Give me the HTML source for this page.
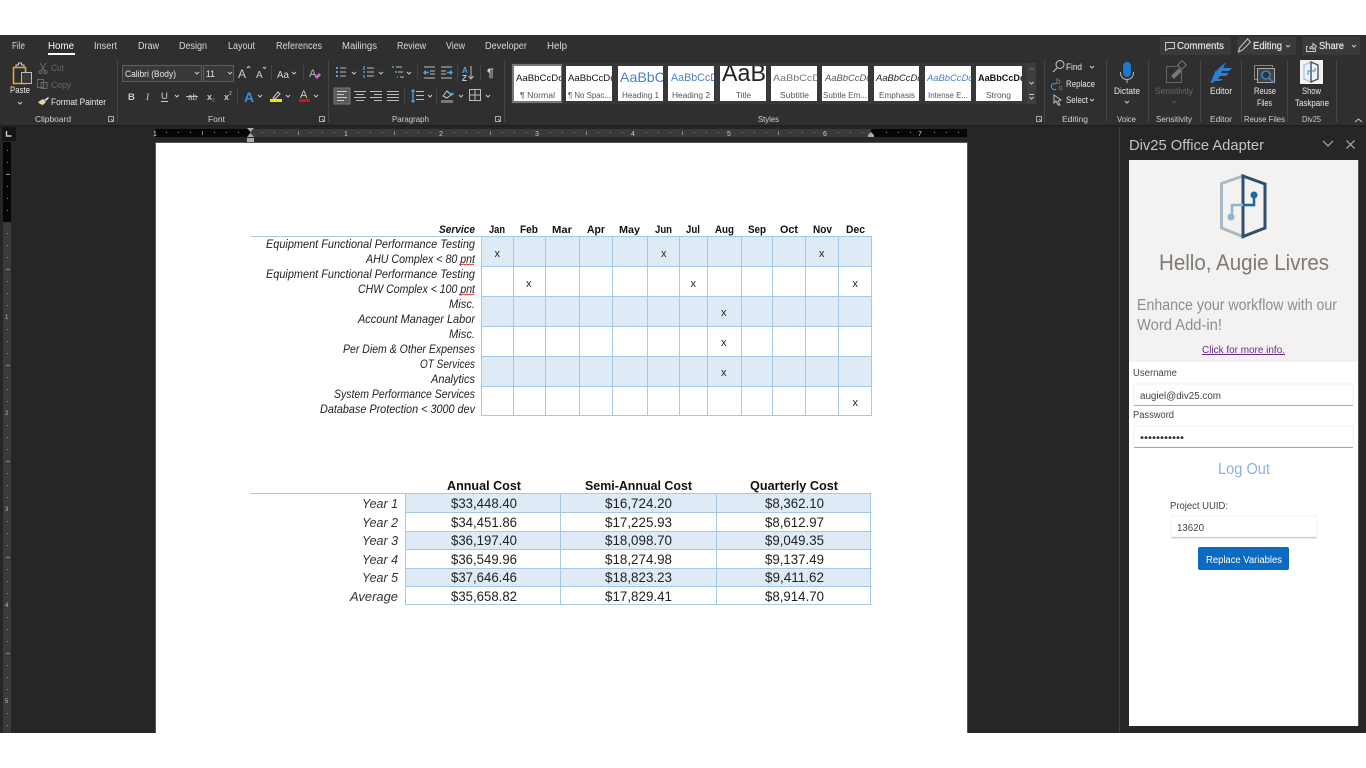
<!DOCTYPE html>
<html><head><meta charset="utf-8"><title>Word</title>
<style>
html,body{margin:0;padding:0;background:#fff;width:1366px;height:768px;overflow:hidden}
svg{display:block}
text{font-family:"Liberation Sans",sans-serif;white-space:pre}
.t{font-size:9px;fill:#e8e8e8}
.tb{font-size:10px;fill:#d8d8d8}
.d{font-size:9px;fill:#666}
.l{font-size:8.5px;fill:#d0d0d0}
.i{font-size:12px;font-style:italic;fill:#222}
.bh{font-size:11px;font-weight:bold;fill:#111}
.x{font-size:11px;fill:#222}
.n{font-size:14px;fill:#222}
.y{font-size:13px;font-style:italic;fill:#333}
.h{font-size:13px;font-weight:bold;fill:#111}
.s{font-size:9px;fill:#111}
.sl{font-size:8.5px;fill:#555}
.p{font-size:10px;fill:#444}
.ln{stroke:#bdbdbd;stroke-width:1;fill:none}
.bl{stroke:#4aa3e0;stroke-width:1.4;fill:none}
.c{stroke:#c8c8c8;stroke-width:1;fill:none}
.sep{stroke:#454545;stroke-width:1}
.g{stroke:#a6c8e8;stroke-width:1}
</style></head><body>
<svg width="1366" height="768" viewBox="0 0 1366 768" xmlns="http://www.w3.org/2000/svg">
<rect width="1366" height="768" fill="#fff"/>
<rect y="35" width="1366" height="698" fill="#262626"/>
<rect y="35" width="1366" height="91" fill="#2f2f2f"/>
<rect y="125" width="1366" height="2" fill="#202020"/>

<!-- tabs -->
<text class="tb" x="12" y="49" textLength="13" lengthAdjust="spacingAndGlyphs">File</text>
<text class="tb" x="48" y="49" textLength="26" lengthAdjust="spacingAndGlyphs" style="fill:#fff">Home</text>
<rect x="48" y="53" width="27" height="2" fill="#fff"/>
<text class="tb" x="94" y="49" textLength="23" lengthAdjust="spacingAndGlyphs">Insert</text>
<text class="tb" x="138" y="49" textLength="21" lengthAdjust="spacingAndGlyphs">Draw</text>
<text class="tb" x="179" y="49" textLength="28" lengthAdjust="spacingAndGlyphs">Design</text>
<text class="tb" x="228" y="49" textLength="27" lengthAdjust="spacingAndGlyphs">Layout</text>
<text class="tb" x="276" y="49" textLength="46" lengthAdjust="spacingAndGlyphs">References</text>
<text class="tb" x="342" y="49" textLength="35" lengthAdjust="spacingAndGlyphs">Mailings</text>
<text class="tb" x="397" y="49" textLength="29" lengthAdjust="spacingAndGlyphs">Review</text>
<text class="tb" x="446" y="49" textLength="19" lengthAdjust="spacingAndGlyphs">View</text>
<text class="tb" x="485" y="49" textLength="42" lengthAdjust="spacingAndGlyphs">Developer</text>
<text class="tb" x="547" y="49" textLength="20" lengthAdjust="spacingAndGlyphs">Help</text>

<!-- top right buttons -->
<rect x="1160" y="37" width="71" height="18" rx="1" fill="#3a3a3a"/>
<rect x="1237" y="37" width="59" height="18" rx="1" fill="#3a3a3a"/>
<rect x="1302" y="37" width="58" height="18" rx="1" fill="#3a3a3a"/>
<path d="M1165.500 42.500h9v6h-6l-3 2z" class="c"/>
<text class="tb" x="1177" y="49" textLength="47" lengthAdjust="spacingAndGlyphs" style="fill:#e4e4e4;stroke:#e4e4e4;stroke-width:.2">Comments</text>
<path d="M1238.500 52l1-4 8-9 3 3-8 8z" class="c"/>
<text class="tb" x="1253" y="49" textLength="29" lengthAdjust="spacingAndGlyphs" style="fill:#e4e4e4;stroke:#e4e4e4;stroke-width:.2">Editing</text>
<path d="M1286 45l2 2 2-2" class="c"/>
<path d="M1308 46.500h-1.500v5h9v-3M1310 49v-2l3-1v-2.500l3.500 3-3.500 3v-2z" class="c"/>
<text class="tb" x="1319" y="49" textLength="25" lengthAdjust="spacingAndGlyphs" style="fill:#e4e4e4;stroke:#e4e4e4;stroke-width:.2">Share</text>
<path d="M1352 45l2 2 2-2" class="c"/>

<!-- Clipboard -->
<path d="M13.500 67.500h12v16h-12z" fill="none" stroke="#e8a33d" stroke-width="1.600"/>
<path d="M16 67v-2h2.500v-2h3v2h2.500v2" fill="none" stroke="#cfcfcf"/>
<rect x="21.500" y="72.500" width="10" height="11" fill="#3a3a3a" stroke="#bdbdbd"/>
<text class="t" x="10" y="93" textLength="20" lengthAdjust="spacingAndGlyphs">Paste</text>
<path d="M18 102l2 2 2-2" class="c"/>
<path d="M40 63l5 8M46 63l-5 8" stroke="#6a6a6a" fill="none"/><circle cx="40.500" cy="72" r="1.500" fill="none" stroke="#6a6a6a"/><circle cx="45.500" cy="72" r="1.500" fill="none" stroke="#6a6a6a"/>
<text class="d" x="51" y="71" textLength="13" lengthAdjust="spacingAndGlyphs">Cut</text>
<path d="M37.500 79.500h6v8h-6zM41 82.500h6v6h-6z" fill="#2f2f2f" stroke="#6a6a6a"/>
<text class="d" x="51" y="88" textLength="20" lengthAdjust="spacingAndGlyphs">Copy</text>
<path d="M38 102l5-3 3 3-3 3-3-1z" fill="#e8d8a0"/><path d="M44 100l4-3 1 1-3 3z" fill="#ddd"/>
<text class="t" x="51" y="105" textLength="55" lengthAdjust="spacingAndGlyphs">Format Painter</text>
<text class="l" x="35" y="122" textLength="36" lengthAdjust="spacingAndGlyphs">Clipboard</text>
<path d="M108.500 116.500h5v5h-5zM111 119l2 2" stroke="#aaa" fill="none"/>
<line class="sep" x1="117.500" y1="60" x2="117.500" y2="122"/>

<!-- Font -->
<rect x="122.500" y="65.500" width="79" height="16" fill="#383838" stroke="#5e5e5e"/>
<rect x="203.500" y="65.500" width="30" height="16" fill="#383838" stroke="#5e5e5e"/>
<text class="t" x="125" y="77" textLength="51" lengthAdjust="spacingAndGlyphs">Calibri (Body)</text>
<path d="M195 72l2 2 2-2M228 72l2 2 2-2" class="c"/>
<text class="t" x="206" y="77" textLength="9" lengthAdjust="spacingAndGlyphs">11</text>
<text x="238" y="78" style="font-size:12px;fill:#ccc">A</text><path d="M247 68l1.500-1.500 1.500 1.500" class="c"/>
<text x="256" y="78" style="font-size:10px;fill:#ccc">A</text><path d="M263 67l1.500 1.500 1.500-1.500" class="c"/>
<text class="tb" x="277" y="78" textLength="12" lengthAdjust="spacingAndGlyphs">Aa</text><path d="M292 72l2 2 2-2" class="c"/>
<line class="sep" x1="271.500" y1="65" x2="271.500" y2="81"/><line class="sep" x1="303.500" y1="65" x2="303.500" y2="81"/>
<text x="309" y="77" style="font-size:11px;fill:#bbb">A</text><path d="M315 77l4-4 2 2-4 4z" fill="#c86fc8"/>

<text x="128" y="100" style="font-size:9.500px;font-weight:bold;fill:#ccc">B</text>
<text x="146" y="100" style="font-size:9.500px;font-style:italic;fill:#ccc;font-family:'Liberation Serif',serif">I</text>
<text x="161" y="99" style="font-size:9.500px;fill:#ccc">U</text><line x1="161" y1="101.500" x2="168" y2="101.500" stroke="#ccc"/>
<path d="M175 95l2 2 2-2M258 95l2 2 2-2M286 95l2 2 2-2M314 95l2 2 2-2" class="c"/>
<text x="188" y="100" textLength="9" lengthAdjust="spacingAndGlyphs" style="font-size:9px;fill:#bbb">ab</text><line x1="186" y1="96.500" x2="198" y2="96.500" stroke="#bbb"/>
<text x="207" y="100" style="font-size:9px;font-weight:bold;fill:#ccc">x</text><text x="212" y="102" style="font-size:5px;fill:#4aa3e0">2</text>
<text x="224" y="100" style="font-size:9px;font-weight:bold;fill:#ccc">x</text><text x="229" y="95" style="font-size:5px;fill:#ccc">2</text>
<line class="sep" x1="237.500" y1="88" x2="237.500" y2="104"/>
<text x="244" y="102" style="font-size:14px;font-weight:bold;fill:#3a8fd8">A</text>
<path d="M273 98l5-6 2 2-5 5z" fill="none" stroke="#ccc"/><rect x="270" y="99" width="12" height="3" fill="#f3e600"/>
<text x="300" y="98" style="font-size:11px;fill:#ccc">A</text><rect x="299" y="99" width="11" height="3" fill="#e01010"/>
<text class="l" x="208" y="122" textLength="17" lengthAdjust="spacingAndGlyphs">Font</text>
<path d="M319.500 116.500h5v5h-5zM322 119l2 2" stroke="#aaa" fill="none"/>
<line class="sep" x1="328.500" y1="60" x2="328.500" y2="122"/>

<!-- Paragraph -->
<g>
<path d="M340 68h6M340 72h6M340 76h6" class="ln"/><path d="M336 68h2M336 72h2M336 76h2" stroke="#4aa3e0" stroke-width="2"/>
<path d="M367 68h7M367 72h7M367 76h7" class="ln"/><path d="M364 66v4M364 71v2M364 75v3" stroke="#4aa3e0" stroke-width="1.300"/>
<path d="M396 67h6M398 72h5M400 77h4" class="ln"/><path d="M392 67h2M395 72h2M397 77h1" stroke="#4aa3e0" stroke-width="1.500"/>
<path d="M352 72l2 2 2-2M379 72l2 2 2-2M407 72l2 2 2-2" class="c"/>
<line class="sep" x1="417.500" y1="65" x2="417.500" y2="81"/>
<path d="M424 67h11M430 71h5M430 74h5M424 78h11" class="ln"/><path d="M429 72.500h-5m2-2l-2 2 2 2" class="bl"/>
<path d="M441 67h11M441 71h5M441 74h5M441 78h11" class="ln"/><path d="M447 72.500h5m-2-2l2 2-2 2" class="bl"/>
<line class="sep" x1="457.500" y1="65" x2="457.500" y2="81"/>
<text x="462" y="73" style="font-size:8px;font-weight:bold;fill:#4aa3e0">A</text><text x="462" y="81" style="font-size:8px;font-weight:bold;fill:#ccc">Z</text>
<path d="M471 66v13m-2.500-3l2.500 3 2.500-3" class="ln"/>
<line class="sep" x1="480.500" y1="65" x2="480.500" y2="81"/>
<text x="487" y="77" style="font-size:12px;font-weight:bold;fill:#ccc">¶</text>

<rect x="334" y="88" width="16" height="16" fill="#5a5a5a" stroke="#777"/>
<path d="M337 91.500h10M337 94.500h7M337 97.500h10M337 100.500h7" stroke="#ccc"/>
<path d="M354 91.500h12M356 94.500h8M354 97.500h12M356 100.500h8" class="ln"/>
<path d="M370 91.500h12M374 94.500h8M370 97.500h12M374 100.500h8" class="ln"/>
<path d="M387 91.500h12M387 94.500h12M387 97.500h12M387 100.500h12" class="ln"/>
<line class="sep" x1="404.500" y1="88" x2="404.500" y2="104"/>
<path d="M416 91.500h8M416 95.500h8M416 99.500h8" class="ln"/><path d="M413 90v12M411.500 91.500l1.500-1.500 1.500 1.500M411.500 100.500l1.500 1.500 1.500-1.500" class="bl"/>
<path d="M428 95l2 2 2-2M459 95l2 2 2-2M486 95l2 2 2-2" class="c"/>
<line class="sep" x1="436.500" y1="88" x2="436.500" y2="104"/>
<path d="M443 96l4-5 4 4-4 3z" fill="none" stroke="#ccc"/><circle cx="452" cy="94" r="1.500" fill="#4aa3e0"/><rect x="441" y="100" width="12" height="3" fill="#777"/>
<path d="M469.500 89.500h11v11h-11zM475 89.500v11M469.500 95h11" class="ln"/>
<text class="l" x="392" y="122" textLength="37" lengthAdjust="spacingAndGlyphs">Paragraph</text>
<path d="M495.500 116.500h5v5h-5zM498 119l2 2" stroke="#aaa" fill="none"/>
<line class="sep" x1="504.500" y1="60" x2="504.500" y2="122"/>
</g>

<!-- Styles -->
<rect x="511" y="63" width="525" height="41" fill="#383838"/>
<rect x="512" y="64" width="50" height="39" fill="#777"/>
<svg x="514" y="66" width="47" height="35"><rect width="47" height="35" fill="#fff"/><text class="s" x="2" y="15" textLength="47" lengthAdjust="spacingAndGlyphs">AaBbCcDc</text><text class="sl" x="6" y="32" textLength="35" lengthAdjust="spacingAndGlyphs">¶ Normal</text></svg>
<svg x="566" y="66" width="46" height="35"><rect width="46" height="35" fill="#fff"/><text class="s" x="2" y="15" textLength="47" lengthAdjust="spacingAndGlyphs">AaBbCcDc</text><text class="sl" x="2" y="32" textLength="43" lengthAdjust="spacingAndGlyphs">¶ No Spac...</text></svg>
<svg x="618" y="66" width="45" height="35"><rect width="45" height="35" fill="#fff"/><text x="2" y="16" textLength="52" lengthAdjust="spacingAndGlyphs" style="font-size:14px;fill:#4a7fc4">AaBbCc</text><text class="sl" x="4" y="32" textLength="37" lengthAdjust="spacingAndGlyphs">Heading 1</text></svg>
<svg x="668" y="66" width="46" height="35"><rect width="46" height="35" fill="#fff"/><text x="3" y="15" textLength="47" lengthAdjust="spacingAndGlyphs" style="font-size:11px;fill:#4a7fc4">AaBbCcD</text><text class="sl" x="4" y="32" textLength="38" lengthAdjust="spacingAndGlyphs">Heading 2</text></svg>
<svg x="720" y="66" width="46" height="35"><rect width="46" height="35" fill="#fff"/><text x="2" y="15" textLength="44" lengthAdjust="spacingAndGlyphs" style="font-size:24px;fill:#222">AaB</text><text class="sl" x="16" y="32" textLength="15" lengthAdjust="spacingAndGlyphs">Title</text></svg>
<svg x="771" y="66" width="46" height="35"><rect width="46" height="35" fill="#fff"/><text x="2" y="15" textLength="47" lengthAdjust="spacingAndGlyphs" style="font-size:9px;fill:#777">AaBbCcD</text><text class="sl" x="9" y="32" textLength="29" lengthAdjust="spacingAndGlyphs">Subtitle</text></svg>
<svg x="822" y="66" width="46" height="35"><rect width="46" height="35" fill="#fff"/><text x="3" y="15" textLength="46" lengthAdjust="spacingAndGlyphs" style="font-size:9px;font-style:italic;fill:#555">AaBbCcDc</text><text class="sl" x="1" y="32" textLength="44" lengthAdjust="spacingAndGlyphs">Subtle Em...</text></svg>
<svg x="874" y="66" width="45" height="35"><rect width="45" height="35" fill="#fff"/><text x="2" y="15" textLength="46" lengthAdjust="spacingAndGlyphs" style="font-size:9px;font-style:italic;fill:#222">AaBbCcDc</text><text class="sl" x="5" y="32" textLength="36" lengthAdjust="spacingAndGlyphs">Emphasis</text></svg>
<svg x="925" y="66" width="46" height="35"><rect width="46" height="35" fill="#fff"/><text x="2" y="15" textLength="46" lengthAdjust="spacingAndGlyphs" style="font-size:9px;font-style:italic;fill:#4a7fc4">AaBbCcDc</text><text class="sl" x="3" y="32" textLength="40" lengthAdjust="spacingAndGlyphs">Intense E...</text></svg>
<svg x="976" y="66" width="46" height="35"><rect width="46" height="35" fill="#fff"/><text x="2" y="15" textLength="47" lengthAdjust="spacingAndGlyphs" style="font-size:9px;font-weight:bold;fill:#111">AaBbCcDc</text><text class="sl" x="10" y="32" textLength="25" lengthAdjust="spacingAndGlyphs">Strong</text></svg>
<rect x="1027" y="63" width="9" height="41" fill="#3e3e3e"/>
<path d="M1029.500 70l2-2 2 2" stroke="#666" fill="none"/><path d="M1029.500 82l2 2 2-2" class="c"/><path d="M1029 94.500h5M1029.500 97l2 2 2-2" class="c"/>
<text class="l" x="758" y="122" textLength="21" lengthAdjust="spacingAndGlyphs">Styles</text>
<path d="M1036.500 116.500h5v5h-5zM1039 119l2 2" stroke="#aaa" fill="none"/>
<line class="sep" x1="1044.500" y1="60" x2="1044.500" y2="122"/>

<!-- Editing -->
<circle cx="1060" cy="64.500" r="4" fill="none" stroke="#ccc"/><path d="M1057 68l-4 4" stroke="#ccc"/>
<text class="t" x="1066" y="70" textLength="16" lengthAdjust="spacingAndGlyphs">Find</text><path d="M1090 66l2 2 2-2" class="c"/>
<text x="1056" y="84" style="font-size:8px;fill:#b070c0">b</text><path d="M1056 84a3 3 0 1 0 0 5" stroke="#4aa3e0" fill="none"/><text x="1059" y="90" style="font-size:7px;fill:#4aa3e0">c</text>
<text class="t" x="1066" y="87" textLength="29" lengthAdjust="spacingAndGlyphs">Replace</text>
<path d="M1054 95l7 5-3 1 2 4-2 0-2-4-2 2z" fill="none" stroke="#bbb"/>
<text class="t" x="1066" y="103" textLength="22" lengthAdjust="spacingAndGlyphs">Select</text><path d="M1090 99l2 2 2-2" class="c"/>
<text class="l" x="1062" y="122" textLength="26" lengthAdjust="spacingAndGlyphs">Editing</text>
<line class="sep" x1="1106.500" y1="60" x2="1106.500" y2="122"/>

<!-- Dictate -->
<rect x="1123" y="62" width="8" height="15" rx="4" fill="#1e78d2"/>
<path d="M1120.500 72v1a6.500 6.500 0 0 0 13 0v-1M1127 80v3" stroke="#bbb" fill="none"/>
<text class="t" x="1114" y="94" textLength="26" lengthAdjust="spacingAndGlyphs">Dictate</text>
<path d="M1125 101l2 2 2-2" class="c"/>
<text class="l" x="1117" y="122" textLength="19" lengthAdjust="spacingAndGlyphs">Voice</text>
<line class="sep" x1="1148.500" y1="60" x2="1148.500" y2="122"/>

<!-- Sensitivity -->
<path d="M1166.500 66.500h12M1166.500 66.500v16h15v-11" fill="none" stroke="#666"/>
<path d="M1171 76l8-8 3 3-8 8z" fill="#777"/><rect x="1179" y="62" width="6" height="6" transform="rotate(45 1182 65)" fill="none" stroke="#777"/>
<text class="d" x="1155" y="94" textLength="38" lengthAdjust="spacingAndGlyphs">Sensitivity</text>
<path d="M1172 101l2 2 2-2" stroke="#555" fill="none"/>
<text class="l" x="1156" y="122" textLength="36" lengthAdjust="spacingAndGlyphs">Sensitivity</text>
<line class="sep" x1="1200.500" y1="60" x2="1200.500" y2="122"/>

<!-- Editor -->
<path d="M1211 83l6-13 9-8-3 6h9l-3 3h-7l-1 2h8l-3 3h-6l-2 3h5l-3 2h-5l-3 2z" fill="#2a7fd6"/>
<path d="M1211 83l5-12" stroke="#2a7fd6" fill="none"/>
<text class="t" x="1210" y="94" textLength="22" lengthAdjust="spacingAndGlyphs">Editor</text>
<text class="l" x="1210" y="122" textLength="22" lengthAdjust="spacingAndGlyphs">Editor</text>
<line class="sep" x1="1241.500" y1="60" x2="1241.500" y2="122"/>

<!-- Reuse -->
<path d="M1254.500 65.500h18v2M1254.500 65.500v14h3" fill="none" stroke="#888"/>
<rect x="1257.500" y="68.500" width="17" height="14" fill="#444" stroke="#aaa"/>
<circle cx="1266" cy="75" r="4" fill="#333" stroke="#3a8fd8" stroke-width="1.300"/><path d="M1269 78l5 5" stroke="#3a8fd8" stroke-width="1.300"/>
<text class="t" x="1254" y="94" textLength="22" lengthAdjust="spacingAndGlyphs">Reuse</text>
<text class="t" x="1257" y="106" textLength="15" lengthAdjust="spacingAndGlyphs">Files</text>
<text class="l" x="1244" y="122" textLength="41" lengthAdjust="spacingAndGlyphs">Reuse Files</text>
<line class="sep" x1="1287.500" y1="60" x2="1287.500" y2="122"/>

<!-- Taskpane -->
<rect x="1300" y="60" width="23" height="24" fill="#f2f2f2"/>
<path d="M1311 62l-7 3v14l7 3z" fill="none" stroke="#a9c4d8" stroke-width="1.300"/><path d="M1311 62l7 3v14l-7 3z" fill="none" stroke="#2d4f6b" stroke-width="1.300"/>
<path d="M1315 68v3h-4M1311 71h-3v4" fill="none" stroke="#2a8ac8"/>
<text class="t" x="1302" y="94" textLength="19" lengthAdjust="spacingAndGlyphs">Show</text>
<text class="t" x="1295" y="106" textLength="34" lengthAdjust="spacingAndGlyphs">Taskpane</text>
<text class="l" x="1302" y="122" textLength="19" lengthAdjust="spacingAndGlyphs">Div25</text>
<line class="sep" x1="1336.500" y1="60" x2="1336.500" y2="122"/>
<path d="M1355 122l3.500-3 3.500 3" class="c"/>

<!-- Rulers -->
<rect x="2" y="127" width="14" height="14" fill="#151515"/>
<path d="M6.500 131v5h5" stroke="#ccc" stroke-width="1.400" fill="none"/>
<rect x="154" y="129" width="813" height="8" fill="#3a3a3a"/>
<rect x="155" y="129" width="95" height="8" fill="#060606"/>
<rect x="871" y="129" width="96" height="8" fill="#060606"/>
<g fill="#888">
<rect x="166" y="132" width="1" height="1"/><rect x="178" y="132" width="1" height="1"/><rect x="190" y="132" width="1" height="1"/><rect x="202" y="131" width="1" height="4"/><rect x="214" y="132" width="1" height="1"/><rect x="226" y="132" width="1" height="1"/><rect x="238" y="132" width="1" height="1"/>
<rect x="262" y="132" width="1" height="1"/><rect x="274" y="132" width="1" height="1"/><rect x="286" y="132" width="1" height="1"/><rect x="298" y="131" width="1" height="4"/><rect x="310" y="132" width="1" height="1"/><rect x="322" y="132" width="1" height="1"/><rect x="334" y="132" width="1" height="1"/>
<rect x="358" y="132" width="1" height="1"/><rect x="370" y="132" width="1" height="1"/><rect x="382" y="132" width="1" height="1"/><rect x="394" y="131" width="1" height="4"/><rect x="406" y="132" width="1" height="1"/><rect x="418" y="132" width="1" height="1"/><rect x="430" y="132" width="1" height="1"/>
<rect x="454" y="132" width="1" height="1"/><rect x="466" y="132" width="1" height="1"/><rect x="478" y="132" width="1" height="1"/><rect x="490" y="131" width="1" height="4"/><rect x="502" y="132" width="1" height="1"/><rect x="514" y="132" width="1" height="1"/><rect x="526" y="132" width="1" height="1"/>
<rect x="550" y="132" width="1" height="1"/><rect x="562" y="132" width="1" height="1"/><rect x="574" y="132" width="1" height="1"/><rect x="586" y="131" width="1" height="4"/><rect x="598" y="132" width="1" height="1"/><rect x="610" y="132" width="1" height="1"/><rect x="622" y="132" width="1" height="1"/>
<rect x="646" y="132" width="1" height="1"/><rect x="658" y="132" width="1" height="1"/><rect x="670" y="132" width="1" height="1"/><rect x="682" y="131" width="1" height="4"/><rect x="694" y="132" width="1" height="1"/><rect x="706" y="132" width="1" height="1"/><rect x="718" y="132" width="1" height="1"/>
<rect x="742" y="132" width="1" height="1"/><rect x="754" y="132" width="1" height="1"/><rect x="766" y="132" width="1" height="1"/><rect x="778" y="131" width="1" height="4"/><rect x="790" y="132" width="1" height="1"/><rect x="802" y="132" width="1" height="1"/><rect x="814" y="132" width="1" height="1"/>
<rect x="838" y="132" width="1" height="1"/><rect x="850" y="132" width="1" height="1"/><rect x="862" y="132" width="1" height="1"/><rect x="886" y="132" width="1" height="1"/><rect x="898" y="132" width="1" height="1"/><rect x="910" y="132" width="1" height="1"/><rect x="934" y="132" width="1" height="1"/><rect x="946" y="132" width="1" height="1"/><rect x="958" y="132" width="1" height="1"/>
</g>
<g>
<text x="153" y="136" style="font-size:7px;fill:#ccc">1</text><text x="344" y="136" style="font-size:7px;fill:#ccc">1</text><text x="439" y="136" style="font-size:7px;fill:#ccc">2</text><text x="535" y="136" style="font-size:7px;fill:#ccc">3</text><text x="631" y="136" style="font-size:7px;fill:#ccc">4</text><text x="727" y="136" style="font-size:7px;fill:#ccc">5</text><text x="823" y="136" style="font-size:7px;fill:#ccc">6</text><text x="918" y="136" style="font-size:7px;fill:#ccc">7</text>
</g>
<path d="M247 128h7l-3.500 4zM247 137l3.500-4 3.500 4zM247 138h7v4h-7z" fill="#aaa"/>
<path d="M871 137l-3 0v-2l3-3 3 3v2z" fill="#aaa"/>

<rect x="3" y="142" width="8" height="591" fill="#3a3a3a"/>
<rect x="3" y="142" width="8" height="80" fill="#060606"/>
<g fill="#888">
<rect x="7" y="150" width="1" height="1"/><rect x="7" y="162" width="1" height="1"/><rect x="6" y="174" width="4" height="1"/><rect x="7" y="186" width="1" height="1"/><rect x="7" y="198" width="1" height="1"/><rect x="7" y="210" width="1" height="1"/><rect x="7" y="233" width="1" height="1"/><rect x="7" y="245" width="1" height="1"/><rect x="7" y="257" width="1" height="1"/><rect x="6" y="269" width="4" height="1"/><rect x="7" y="281" width="1" height="1"/><rect x="7" y="293" width="1" height="1"/><rect x="7" y="305" width="1" height="1"/><rect x="7" y="329" width="1" height="1"/><rect x="7" y="341" width="1" height="1"/><rect x="7" y="353" width="1" height="1"/><rect x="6" y="365" width="4" height="1"/><rect x="7" y="377" width="1" height="1"/><rect x="7" y="389" width="1" height="1"/><rect x="7" y="401" width="1" height="1"/><rect x="7" y="425" width="1" height="1"/><rect x="7" y="437" width="1" height="1"/><rect x="7" y="449" width="1" height="1"/><rect x="6" y="461" width="4" height="1"/><rect x="7" y="473" width="1" height="1"/><rect x="7" y="485" width="1" height="1"/><rect x="7" y="497" width="1" height="1"/><rect x="7" y="521" width="1" height="1"/><rect x="7" y="533" width="1" height="1"/><rect x="7" y="545" width="1" height="1"/><rect x="6" y="557" width="4" height="1"/><rect x="7" y="569" width="1" height="1"/><rect x="7" y="581" width="1" height="1"/><rect x="7" y="593" width="1" height="1"/><rect x="7" y="617" width="1" height="1"/><rect x="7" y="629" width="1" height="1"/><rect x="7" y="641" width="1" height="1"/><rect x="6" y="653" width="4" height="1"/><rect x="7" y="665" width="1" height="1"/><rect x="7" y="677" width="1" height="1"/><rect x="7" y="689" width="1" height="1"/><rect x="7" y="713" width="1" height="1"/><rect x="7" y="725" width="1" height="1"/>
</g>
<g><text x="5" y="319" style="fill:#bbb;font-size:6px">1</text><text x="5" y="415" style="fill:#bbb;font-size:6px">2</text><text x="5" y="511" style="fill:#bbb;font-size:6px">3</text><text x="5" y="607" style="fill:#bbb;font-size:6px">4</text><text x="5" y="703" style="fill:#bbb;font-size:6px">5</text></g>

<!-- Page -->
<rect x="155" y="142" width="813" height="591" fill="#555"/>
<rect x="156" y="143" width="811" height="590" fill="#fff"/>

<!-- Table 1 -->
<rect x="481" y="236" width="390" height="30" fill="#deeaf6"/>
<rect x="481" y="296" width="390" height="30" fill="#deeaf6"/>
<rect x="481" y="356" width="390" height="30" fill="#deeaf6"/>
<path class="g" d="M251 236.500H871.500M481 266.500H871.500M481 296.500H871.500M481 326.500H871.500M481 356.500H871.500M481 386.500H871.500M481 415.500H871.500"/>
<path class="g" d="M481.500 236V416M513.500 236V416M545.500 236V416M579.500 236V416M612.500 236V416M647.500 236V416M679.500 236V416M707.500 236V416M741.500 236V416M772.500 236V416M805.500 236V416M838.500 236V416M871.500 236V416"/>

<text class="bh" x="439" y="233" textLength="36" lengthAdjust="spacingAndGlyphs" style="font-style:italic">Service</text>
<text class="bh" x="489" y="233" textLength="16" lengthAdjust="spacingAndGlyphs">Jan</text>
<text class="bh" x="520" y="233" textLength="18" lengthAdjust="spacingAndGlyphs">Feb</text>
<text class="bh" x="552" y="233" textLength="20" lengthAdjust="spacingAndGlyphs" style="font-size:10.500px">Mar</text>
<text class="bh" x="587" y="233" textLength="18" lengthAdjust="spacingAndGlyphs">Apr</text>
<text class="bh" x="619" y="233" textLength="21" lengthAdjust="spacingAndGlyphs" style="font-size:10.500px">May</text>
<text class="bh" x="655" y="233" textLength="17" lengthAdjust="spacingAndGlyphs">Jun</text>
<text class="bh" x="686" y="233" textLength="14" lengthAdjust="spacingAndGlyphs">Jul</text>
<text class="bh" x="715" y="233" textLength="19" lengthAdjust="spacingAndGlyphs">Aug</text>
<text class="bh" x="748" y="233" textLength="18" lengthAdjust="spacingAndGlyphs">Sep</text>
<text class="bh" x="780" y="233" textLength="18" lengthAdjust="spacingAndGlyphs">Oct</text>
<text class="bh" x="813" y="233" textLength="19" lengthAdjust="spacingAndGlyphs">Nov</text>
<text class="bh" x="846" y="233" textLength="19" lengthAdjust="spacingAndGlyphs">Dec</text>

<text class="i" x="266" y="248" textLength="209" lengthAdjust="spacingAndGlyphs">Equipment Functional Performance Testing</text>
<text class="i" x="366" y="263" textLength="109" lengthAdjust="spacingAndGlyphs">AHU Complex &lt; 80 pnt</text>
<text class="i" x="266" y="278" textLength="209" lengthAdjust="spacingAndGlyphs">Equipment Functional Performance Testing</text>
<text class="i" x="358" y="293" textLength="117" lengthAdjust="spacingAndGlyphs">CHW Complex &lt; 100 pnt</text>
<text class="i" x="449" y="308" textLength="26" lengthAdjust="spacingAndGlyphs">Misc.</text>
<text class="i" x="358" y="323" textLength="117" lengthAdjust="spacingAndGlyphs">Account Manager Labor</text>
<text class="i" x="449" y="338" textLength="26" lengthAdjust="spacingAndGlyphs">Misc.</text>
<text class="i" x="343" y="353" textLength="132" lengthAdjust="spacingAndGlyphs">Per Diem &amp; Other Expenses</text>
<text class="i" x="420" y="368" textLength="55" lengthAdjust="spacingAndGlyphs">OT Services</text>
<text class="i" x="431" y="383" textLength="44" lengthAdjust="spacingAndGlyphs">Analytics</text>
<text class="i" x="334" y="398" textLength="141" lengthAdjust="spacingAndGlyphs">System Performance Services</text>
<text class="i" x="320" y="413" textLength="155" lengthAdjust="spacingAndGlyphs">Database Protection &lt; 3000 dev</text>
<path d="M459 265l1.500-1 1.500 1 1.500-1 1.500 1 1.500-1 1.500 1 1.500-1 1.500 1 1.500-1 1.500 1M459 295l1.500-1 1.500 1 1.500-1 1.500 1 1.500-1 1.500 1 1.500-1 1.500 1 1.500-1 1.500 1" stroke="#e02020" stroke-width=".8" fill="none"/>

<text class="x" x="494.500" y="257">x</text><text class="x" x="661" y="257">x</text><text class="x" x="819" y="257">x</text>
<text class="x" x="526" y="287">x</text><text class="x" x="690.500" y="287">x</text><text class="x" x="852.500" y="287">x</text>
<text class="x" x="721" y="316">x</text><text class="x" x="721" y="346">x</text><text class="x" x="721" y="376">x</text><text class="x" x="852.500" y="406">x</text>

<!-- Table 2 -->
<rect x="405" y="493" width="466" height="19" fill="#deeaf6"/>
<rect x="405" y="531" width="466" height="18" fill="#deeaf6"/>
<rect x="405" y="568" width="466" height="18" fill="#deeaf6"/>
<path class="g" d="M251 493.500H871.500M405 512.500H871.500M405 531.500H871.500M405 549.500H871.500M405 568.500H871.500M405 586.500H871.500M405 604.500H871.500"/>
<path class="g" d="M405.500 493V605M560.500 493V605M716.500 493V605M870.500 493V605"/>
<text class="h" x="447" y="490" textLength="74" lengthAdjust="spacingAndGlyphs">Annual Cost</text>
<text class="h" x="585" y="490" textLength="107" lengthAdjust="spacingAndGlyphs">Semi-Annual Cost</text>
<text class="h" x="750" y="490" textLength="88" lengthAdjust="spacingAndGlyphs">Quarterly Cost</text>

<text class="y" x="362" y="508" textLength="36" lengthAdjust="spacingAndGlyphs">Year 1</text>
<text class="y" x="362" y="527" textLength="36" lengthAdjust="spacingAndGlyphs">Year 2</text>
<text class="y" x="362" y="545" textLength="36" lengthAdjust="spacingAndGlyphs">Year 3</text>
<text class="y" x="362" y="564" textLength="36" lengthAdjust="spacingAndGlyphs">Year 4</text>
<text class="y" x="362" y="582" textLength="36" lengthAdjust="spacingAndGlyphs">Year 5</text>
<text class="y" x="350" y="601" textLength="48" lengthAdjust="spacingAndGlyphs">Average</text>

<text class="n" x="451" y="508" textLength="66" lengthAdjust="spacingAndGlyphs">$33,448.40</text>
<text class="n" x="451" y="527" textLength="66" lengthAdjust="spacingAndGlyphs">$34,451.86</text>
<text class="n" x="451" y="545" textLength="66" lengthAdjust="spacingAndGlyphs">$36,197.40</text>
<text class="n" x="451" y="564" textLength="66" lengthAdjust="spacingAndGlyphs">$36,549.96</text>
<text class="n" x="451" y="582" textLength="66" lengthAdjust="spacingAndGlyphs">$37,646.46</text>
<text class="n" x="451" y="601" textLength="66" lengthAdjust="spacingAndGlyphs">$35,658.82</text>
<text class="n" x="605" y="508" textLength="67" lengthAdjust="spacingAndGlyphs">$16,724.20</text>
<text class="n" x="605" y="527" textLength="67" lengthAdjust="spacingAndGlyphs">$17,225.93</text>
<text class="n" x="605" y="545" textLength="67" lengthAdjust="spacingAndGlyphs">$18,098.70</text>
<text class="n" x="605" y="564" textLength="67" lengthAdjust="spacingAndGlyphs">$18,274.98</text>
<text class="n" x="605" y="582" textLength="67" lengthAdjust="spacingAndGlyphs">$18,823.23</text>
<text class="n" x="605" y="601" textLength="67" lengthAdjust="spacingAndGlyphs">$17,829.41</text>
<text class="n" x="765" y="508" textLength="59" lengthAdjust="spacingAndGlyphs">$8,362.10</text>
<text class="n" x="765" y="527" textLength="59" lengthAdjust="spacingAndGlyphs">$8,612.97</text>
<text class="n" x="765" y="545" textLength="59" lengthAdjust="spacingAndGlyphs">$9,049.35</text>
<text class="n" x="765" y="564" textLength="59" lengthAdjust="spacingAndGlyphs">$9,137.49</text>
<text class="n" x="765" y="582" textLength="59" lengthAdjust="spacingAndGlyphs">$9,411.62</text>
<text class="n" x="765" y="601" textLength="59" lengthAdjust="spacingAndGlyphs">$8,914.70</text>

<!-- Task pane -->
<line x1="1119.500" y1="127" x2="1119.500" y2="733" stroke="#3c3c3c"/>
<text x="1129" y="150" textLength="135" lengthAdjust="spacingAndGlyphs" style="font-size:15px;fill:#c4c4c4">Div25 Office Adapter</text>
<path d="M1323 141l5 5 5-5" stroke="#bbb" fill="none"/>
<path d="M1346.500 140.500l8 8M1354.500 140.500l-8 8" stroke="#bbb" fill="none"/>
<rect x="1129" y="160" width="229" height="566" fill="#fff"/>
<rect x="1129" y="160" width="229" height="202" fill="#f3f2f1"/>
<line x1="1358.500" y1="160" x2="1358.500" y2="726" stroke="#555"/>

<path d="M1221.500 183.500L1243 176V236.500L1221.500 228z" fill="none" stroke="#a9b8c3" stroke-width="3"/>
<path d="M1243 176L1265 184V228L1243 236.500z" fill="none" stroke="#2d4f6b" stroke-width="3"/>
<path d="M1254 195v10h-11" fill="none" stroke="#1a6a9e" stroke-width="2.500"/><circle cx="1254" cy="195" r="3.500" fill="#1a6a9e"/>
<path d="M1243 205h-11v12" fill="none" stroke="#8fb5cf" stroke-width="2.500"/><circle cx="1231" cy="217" r="3.500" fill="#8fb5cf"/>

<text x="1159" y="270" textLength="170" lengthAdjust="spacingAndGlyphs" style="font-size:22px;fill:#7d7a77">Hello, Augie Livres</text>
<text x="1137" y="310" textLength="200" lengthAdjust="spacingAndGlyphs" style="font-size:15.500px;fill:#8f8d8b">Enhance your workflow with our</text>
<text x="1137" y="330" textLength="85" lengthAdjust="spacingAndGlyphs" style="font-size:15.500px;fill:#8f8d8b">Word Add-in!</text>
<text x="1202" y="353" textLength="83" lengthAdjust="spacingAndGlyphs" style="font-size:10px;fill:#6b2c91;text-decoration:underline">Click for more info.</text>

<text class="p" x="1133" y="376" textLength="44" lengthAdjust="spacingAndGlyphs">Username</text>
<rect x="1134" y="384" width="219" height="21" fill="#fff" stroke="#f0f0f0"/><line x1="1134" y1="405.500" x2="1353" y2="405.500" stroke="#aaa"/>
<text class="p" x="1140" y="399" textLength="81" lengthAdjust="spacingAndGlyphs">augiel@div25.com</text>
<text class="p" x="1133" y="418" textLength="41" lengthAdjust="spacingAndGlyphs">Password</text>
<rect x="1134" y="426" width="219" height="21" fill="#fff" stroke="#f0f0f0"/><line x1="1134" y1="447.500" x2="1353" y2="447.500" stroke="#aaa"/>
<text x="1140" y="441" textLength="44" lengthAdjust="spacingAndGlyphs" style="font-size:10px;fill:#333">•••••••••••</text>
<text x="1218" y="474" textLength="52" lengthAdjust="spacingAndGlyphs" style="font-size:15.500px;fill:#8ab2e6">Log Out</text>
<text class="p" x="1170" y="509" textLength="58" lengthAdjust="spacingAndGlyphs">Project UUID:</text>
<rect x="1171" y="516" width="146" height="21" fill="#fff" stroke="#f0f0f0"/><rect x="1171" y="537" width="146" height="1.500" fill="#d0d0d0"/>
<text class="p" x="1177" y="531" textLength="27" lengthAdjust="spacingAndGlyphs">13620</text>
<rect x="1198" y="547" width="91" height="23" rx="2" fill="#0b6ac2"/>
<text x="1206" y="563" textLength="76" lengthAdjust="spacingAndGlyphs" style="font-size:10px;fill:#fff">Replace Variables</text>
</svg>
</body></html>
